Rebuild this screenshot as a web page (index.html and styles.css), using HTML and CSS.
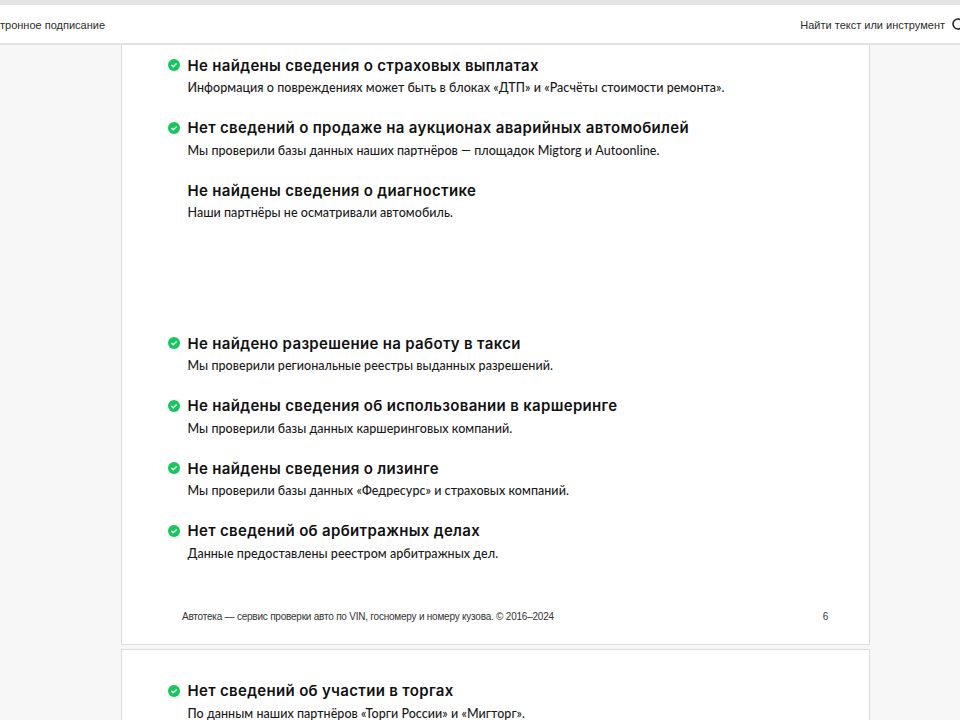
FILE: index.html
```html
<!DOCTYPE html>
<html lang="ru">
<head>
<meta charset="utf-8">
<title>Автотека</title>
<link rel="stylesheet" href="styles.css">
</head>
<body>
<div class="strip"></div>
<header class="toolbar">
  <span class="tool-left">Электронное подписание</span>
  <div class="tool-right">
    <span>Найти текст или инструмент</span>
    <svg class="search" width="16" height="16" viewBox="0 0 16 16"><circle cx="7" cy="7" r="5" fill="none" stroke="#222" stroke-width="1.6"/><path d="M11 11l4 4" stroke="#222" stroke-width="1.6"/></svg>
  </div>
</header>
<main class="viewer">
  <section class="page page-first">
    <div class="item">
      <svg class="check" viewBox="0 0 12 12"><circle cx="6" cy="6" r="6" fill="#12c85a"/><path d="M3.4 6.1l1.8 1.7 3.4-3.2" fill="none" stroke="#fff" stroke-width="1.4"/></svg>
      <h3>Не найдены сведения о страховых выплатах</h3>
      <p>Информация о повреждениях может быть в блоках «ДТП» и «Расчёты стоимости ремонта».</p>
    </div>
    <div class="item">
      <svg class="check" viewBox="0 0 12 12"><circle cx="6" cy="6" r="6" fill="#12c85a"/><path d="M3.4 6.1l1.8 1.7 3.4-3.2" fill="none" stroke="#fff" stroke-width="1.4"/></svg>
      <h3>Нет сведений о продаже на аукционах аварийных автомобилей</h3>
      <p>Мы проверили базы данных наших партнёров — площадок Migtorg и Autoonline.</p>
    </div>
    <div class="item item-gap">
      <h3>Не найдены сведения о диагностике</h3>
      <p>Наши партнёры не осматривали автомобиль.</p>
    </div>
    <div class="item">
      <svg class="check" viewBox="0 0 12 12"><circle cx="6" cy="6" r="6" fill="#12c85a"/><path d="M3.4 6.1l1.8 1.7 3.4-3.2" fill="none" stroke="#fff" stroke-width="1.4"/></svg>
      <h3>Не найдено разрешение на работу в такси</h3>
      <p>Мы проверили региональные реестры выданных разрешений.</p>
    </div>
    <div class="item">
      <svg class="check" viewBox="0 0 12 12"><circle cx="6" cy="6" r="6" fill="#12c85a"/><path d="M3.4 6.1l1.8 1.7 3.4-3.2" fill="none" stroke="#fff" stroke-width="1.4"/></svg>
      <h3>Не найдены сведения об использовании в каршеринге</h3>
      <p>Мы проверили базы данных каршеринговых компаний.</p>
    </div>
    <div class="item">
      <svg class="check" viewBox="0 0 12 12"><circle cx="6" cy="6" r="6" fill="#12c85a"/><path d="M3.4 6.1l1.8 1.7 3.4-3.2" fill="none" stroke="#fff" stroke-width="1.4"/></svg>
      <h3>Не найдены сведения о лизинге</h3>
      <p>Мы проверили базы данных «Федресурс» и страховых компаний.</p>
    </div>
    <div class="item">
      <svg class="check" viewBox="0 0 12 12"><circle cx="6" cy="6" r="6" fill="#12c85a"/><path d="M3.4 6.1l1.8 1.7 3.4-3.2" fill="none" stroke="#fff" stroke-width="1.4"/></svg>
      <h3>Нет сведений об арбитражных делах</h3>
      <p>Данные предоставлены реестром арбитражных дел.</p>
    </div>
    <footer class="page-foot">
      <span>Автотека — сервис проверки авто по VIN, госномеру и номеру кузова. © 2016–2024</span>
      <span>6</span>
    </footer>
  </section>
  <section class="page page-next">
    <div class="item">
      <svg class="check" viewBox="0 0 12 12"><circle cx="6" cy="6" r="6" fill="#12c85a"/><path d="M3.4 6.1l1.8 1.7 3.4-3.2" fill="none" stroke="#fff" stroke-width="1.4"/></svg>
      <h3>Нет сведений об участии в торгах</h3>
      <p>По данным наших партнёров «Торги России» и «Мигторг».</p>
    </div>
  </section>
</main>
</body>
</html>
```
FILE: styles.css
```css
html, body {
  margin: 0;
  height: 720px;
  overflow: hidden;
  background: #f7f7f7;
}
body {
  font-family: "Lato", "Liberation Sans", sans-serif;
  color: #1a1a1a;
}
.strip {
  height: 5px;
  background: #e4e4e4;
}
.toolbar {
  height: 37px;
  background: #fff;
  border-bottom: 2px solid #e2e2e2;
  display: flex;
  justify-content: space-between;
  align-items: center;
  padding-top: 1px;
  font-family: "Liberation Sans", sans-serif;
  font-size: 11px;
  color: #2c2c2c;
  overflow: hidden;
}
.tool-left {
  margin-left: -25px;
  white-space: nowrap;
}
.tool-right {
  display: flex;
  align-items: center;
  gap: 6px;
  margin-right: -7px;
}
.search {
  flex: none;
}
.viewer {
  width: 749px;
  margin-left: 121px;
}
.page {
  box-sizing: border-box;
  background: #fff;
  border: 1px solid #dcdcdc;
  padding-left: 46px;
  padding-right: 41px;
}
.page-first {
  border-top: 0;
  height: 600px;
  padding-top: 9.6px;
}
.page-next {
  margin-top: 4px;
  padding-top: 30px;
  height: 100px;
}
.item {
  position: relative;
  height: 62.5px;
  padding-left: 19.5px;
}
.item-gap {
  margin-bottom: 90.5px;
}
.check {
  position: absolute;
  left: 0;
  top: 4.5px;
  width: 12px;
  height: 12px;
}
h3 {
  margin: 0;
  height: 22px;
  font-family: "Inter", sans-serif;
  font-size: 15px;
  line-height: 22px;
  font-weight: 600;
  letter-spacing: 0.32px;
  color: #111;
  white-space: nowrap;
}
p {
  margin: 1.6px 0 0;
  font-size: 12.5px;
  line-height: 20px;
  font-weight: 500;
  letter-spacing: 0.04px;
  white-space: nowrap;
}
.page-foot {
  display: flex;
  justify-content: space-between;
  margin-top: 27px;
  margin-left: 14px;
  font-family: "Liberation Sans", sans-serif;
  font-size: 10px;
  letter-spacing: -0.22px;
  line-height: 14px;
  color: #333;
}
```
